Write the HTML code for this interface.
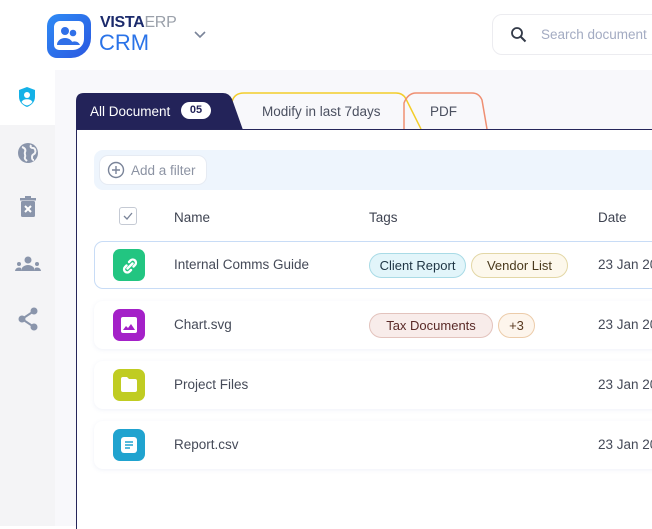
<!DOCTYPE html>
<html><head><meta charset="utf-8"><style>
*{box-sizing:border-box;margin:0;padding:0}
body{width:652px;height:526px;overflow:hidden;background:#fff;font-family:"Liberation Sans",sans-serif;position:relative;color:#3f4452}
.abs{position:absolute}
.side{left:0;top:125px;width:55px;height:401px;background:#f4f4f6}
.content{left:55px;top:70px;width:597px;height:456px;background:#f8f8fb}
.panel{left:76px;top:129px;width:580px;height:400px;background:#fff;border-left:1.5px solid #26265a;border-top:1.5px solid #26265a}
.row{left:94px;width:570px;height:48px;border-radius:9px;background:#fff;box-shadow:0 1px 4px rgba(120,140,200,.12)}
.ic{left:19px;top:8px;width:32px;height:32px;border-radius:7px}
.nm{left:80px;top:16px;font-size:13.5px;color:#454a58}
.dt{left:504px;top:16px;font-size:13.5px;color:#454a58;white-space:nowrap}
.tag{position:absolute;top:12px;height:25px;border-radius:13px;font-size:13px;line-height:23px;text-align:center;border:1px solid;white-space:nowrap}
</style></head><body>
<!-- logo -->
<svg class="abs" style="left:45px;top:12px" width="48" height="46" viewBox="0 0 48 46"><defs><linearGradient id="g" x1="0" y1="0" x2="1" y2="1"><stop offset="0" stop-color="#2f8bf5"/><stop offset="1" stop-color="#2a57e0"/></linearGradient></defs><path d="M14 2h22a10 10 0 0 1 10 10v14a20 20 0 0 1-20 20H12A10 10 0 0 1 2 36V14A12 12 0 0 1 14 2z" fill="url(#g)"/><path d="M15 9h19a5 5 0 0 1 5 5v13a11 11 0 0 1-11 11H14a5 5 0 0 1-5-5V15a6 6 0 0 1 6-6z" fill="#fff"/><circle cx="20" cy="19" r="4" fill="#3070e8"/><circle cx="28" cy="21" r="3.3" fill="#3070e8"/><path d="M12 33a8 7 0 0 1 16 0z" fill="#3070e8"/><path d="M24 33a6 6 0 0 1 11 0z" fill="#3070e8"/></svg>
<div class="abs" style="left:100px;top:14px;font-size:16px;font-weight:bold;color:#1b2a6b;letter-spacing:-.3px">VISTA<span style="font-weight:normal;color:#9aa0aa">ERP</span></div>
<div class="abs" style="left:99px;top:30px;font-size:22px;color:#2a73e8">CRM</div>
<svg class="abs" style="left:193px;top:30px" width="14" height="9"><path d="M2 2l5 5 5-5" stroke="#7a8499" stroke-width="1.6" fill="none"/></svg>
<div class="abs" style="left:492px;top:14px;width:180px;height:41px;border:1px solid #ececf0;border-radius:10px"></div>
<svg class="abs" style="left:510px;top:26px" width="18" height="18"><circle cx="7" cy="7" r="5" stroke="#333a48" stroke-width="1.8" fill="none"/><path d="M11 11l4.5 4.5" stroke="#333a48" stroke-width="2"/></svg>
<div class="abs" style="left:541px;top:27px;font-size:13.5px;color:#a3abc2;white-space:nowrap">Search document</div>

<div class="abs side"></div>
<div class="abs content"></div>
<!-- sidebar icons -->
<svg class="abs" style="left:17px;top:86px" width="20" height="22" viewBox="0 0 20 22"><path d="M10 1l8 3v7c0 5-4 8.5-8 10-4-1.5-8-5-8-10V4z" fill="#14b1e7"/><circle cx="10" cy="9" r="3" fill="#fff"/><path d="M4.5 16a6 4.5 0 0 1 11 0 9 9 0 0 1-5.5 3.5A9 9 0 0 1 4.5 16z" fill="#fff"/></svg>
<svg class="abs" style="left:17px;top:142px" width="22" height="22" viewBox="0 0 22 22"><circle cx="11" cy="11" r="10" fill="#8a95ab"/><path d="M5 5c3 1 4 3 3 5s1 3 0 5 1 3 2 4M14 3c-1 2 0 3 2 3s3 3 2 5-3 1-3 4 1 3 2 3" stroke="#f4f4f6" stroke-width="2" fill="none"/></svg>
<svg class="abs" style="left:19px;top:196px" width="18" height="22" viewBox="0 0 18 22"><rect x="1" y="2" width="16" height="2.5" fill="#8a95ab"/><rect x="6" y="0" width="6" height="2" fill="#8a95ab"/><rect x="2" y="5" width="14" height="16" rx="1.5" fill="#8a95ab"/><path d="M6 10l6 6M12 10l-6 6" stroke="#fff" stroke-width="2"/></svg>
<svg class="abs" style="left:15px;top:256px" width="26" height="16" viewBox="0 0 26 16"><circle cx="13" cy="4" r="3.5" fill="#8a95ab"/><path d="M6 15a7 6 0 0 1 14 0z" fill="#8a95ab"/><circle cx="4" cy="8" r="2" fill="#8a95ab"/><circle cx="22" cy="8" r="2" fill="#8a95ab"/><path d="M0 15a4 4 0 0 1 6-3v3zM26 15a4 4 0 0 0-6-3v3z" fill="#8a95ab"/></svg>
<svg class="abs" style="left:17px;top:307px" width="22" height="24" viewBox="0 0 22 24"><circle cx="17" cy="4" r="3.5" fill="#8a95ab"/><circle cx="5" cy="12" r="3.5" fill="#8a95ab"/><circle cx="17" cy="20" r="3.5" fill="#8a95ab"/><path d="M17 4L5 12l12 8" stroke="#8a95ab" stroke-width="2" fill="none"/></svg>

<!-- tabs -->
<svg class="abs" style="left:76px;top:90px" width="420" height="42"><path d="M156 39L156 12Q158 3 168 3H320Q327 3 330 9L345 39" fill="none" stroke="#f3cd2b" stroke-width="1.5"/><path d="M328 39L328 13Q332 3 340 3H396Q403 3 406 10L411 39" fill="none" stroke="#ef8f72" stroke-width="1.5"/><path d="M0 40V11Q0 3 8 3H147Q153 3 156 9L167 40z" fill="#232359"/></svg>
<div class="abs" style="left:90px;top:104px;font-size:13.5px;color:#fff">All Document</div>
<div class="abs" style="left:181px;top:102px;width:30px;height:17px;border-radius:9px;background:#fff;color:#232359;font-size:11px;font-weight:bold;text-align:center;line-height:17px">05</div>
<div class="abs" style="left:262px;top:104px;font-size:13.5px;color:#4b5060">Modify in last 7days</div>
<div class="abs" style="left:430px;top:104px;font-size:13.5px;color:#4b5060">PDF</div>

<div class="abs panel"></div>
<div class="abs" style="left:94px;top:150px;width:570px;height:40px;background:#eef5fd;border-radius:9px 0 0 9px"></div>
<div class="abs" style="left:99px;top:155px;width:108px;height:30px;background:#fff;border:1px solid #e6ebf3;border-radius:9px"></div>
<svg class="abs" style="left:107px;top:161px" width="18" height="18"><circle cx="9" cy="9" r="7.5" stroke="#7a8499" stroke-width="1.4" fill="none"/><path d="M9 5v8M5 9h8" stroke="#7a8499" stroke-width="1.4"/></svg>
<div class="abs" style="left:131px;top:163px;font-size:13.5px;color:#8c93a3">Add a filter</div>

<div class="abs" style="left:119px;top:207px;width:18px;height:18px;border:1.3px solid #c5cad4;border-radius:3px"></div>
<svg class="abs" style="left:122px;top:210px" width="12" height="12"><path d="M2 6l3 3 5-6" stroke="#7a8499" stroke-width="1.3" fill="none"/></svg>
<div class="abs" style="left:174px;top:210px;font-size:13.5px;color:#3f4452">Name</div>
<div class="abs" style="left:369px;top:210px;font-size:13.5px;color:#3f4452">Tags</div>
<div class="abs" style="left:598px;top:210px;font-size:13.5px;color:#3f4452">Date</div>

<div class="abs row" style="top:241px;border:1px solid #c8dcf6;box-shadow:none">
<div class="abs ic" style="background:#22c581;left:18px;top:7px"></div>
<svg class="abs" style="left:26px;top:15px" width="18" height="18" viewBox="0 0 18 18"><g stroke="#fff" stroke-width="2.4" fill="none" stroke-linecap="round"><path d="M8 5l1.5-1.5a3 3 0 0 1 4.5 4.5L12.5 9.5"/><path d="M10 13l-1.5 1.5a3 3 0 0 1-4.5-4.5L5.5 8.5"/><path d="M6.5 11.5l5-5"/></g></svg>
<div class="abs nm" style="left:79px;top:15px">Internal Comms Guide</div>
<div class="tag" style="left:274px;top:11px;width:97px;background:#e2f5fa;border-color:#a9dbe6;color:#1f3544">Client Report</div>
<div class="tag" style="left:376px;top:11px;width:97px;background:#fdf8ec;border-color:#e3d7a6;color:#4a3a1d">Vendor List</div>
<div class="abs dt" style="left:503px;top:15px">23 Jan 2024</div>
</div>
<div class="abs row" style="top:301px">
<div class="abs ic" style="background:#a421c8"></div>
<div class="abs" style="left:27px;top:16px;width:16px;height:16px;background:#fff;border-radius:2px"></div>
<svg class="abs" style="left:29px;top:22px" width="12" height="8"><path d="M0 7l3-4 2 2 3-4 4 6z" fill="#a421c8"/></svg>
<div class="abs nm">Chart.svg</div>
<div class="tag" style="left:275px;width:124px;background:#f8ecea;border-color:#e3c3bd;color:#5a2a28">Tax Documents</div>
<div class="tag" style="left:404px;width:37px;background:#fdf5ec;border-color:#ecccaa;color:#5a3a20">+3</div>
<div class="abs dt">23 Jan 2024</div>
</div>
<div class="abs row" style="top:361px">
<div class="abs ic" style="background:#c0cc22"></div>
<svg class="abs" style="left:27px;top:16px" width="16" height="15"><path d="M0 2q0-2 2-2h4l2 2h6q2 0 2 2v9q0 2-2 2H2q-2 0-2-2z" fill="#fff"/></svg>
<div class="abs nm">Project Files</div>
<div class="abs dt">23 Jan 2024</div>
</div>
<div class="abs row" style="top:421px">
<div class="abs ic" style="background:#20a3cf"></div>
<div class="abs" style="left:27px;top:16px;width:16px;height:16px;background:#fff;border-radius:3px"></div>
<svg class="abs" style="left:30px;top:19px" width="10" height="10"><path d="M1 2h8M1 5h8M1 8h5" stroke="#20a3cf" stroke-width="1.6"/></svg>
<div class="abs nm">Report.csv</div>
<div class="abs dt">23 Jan 2024</div>
</div>
</body></html>
